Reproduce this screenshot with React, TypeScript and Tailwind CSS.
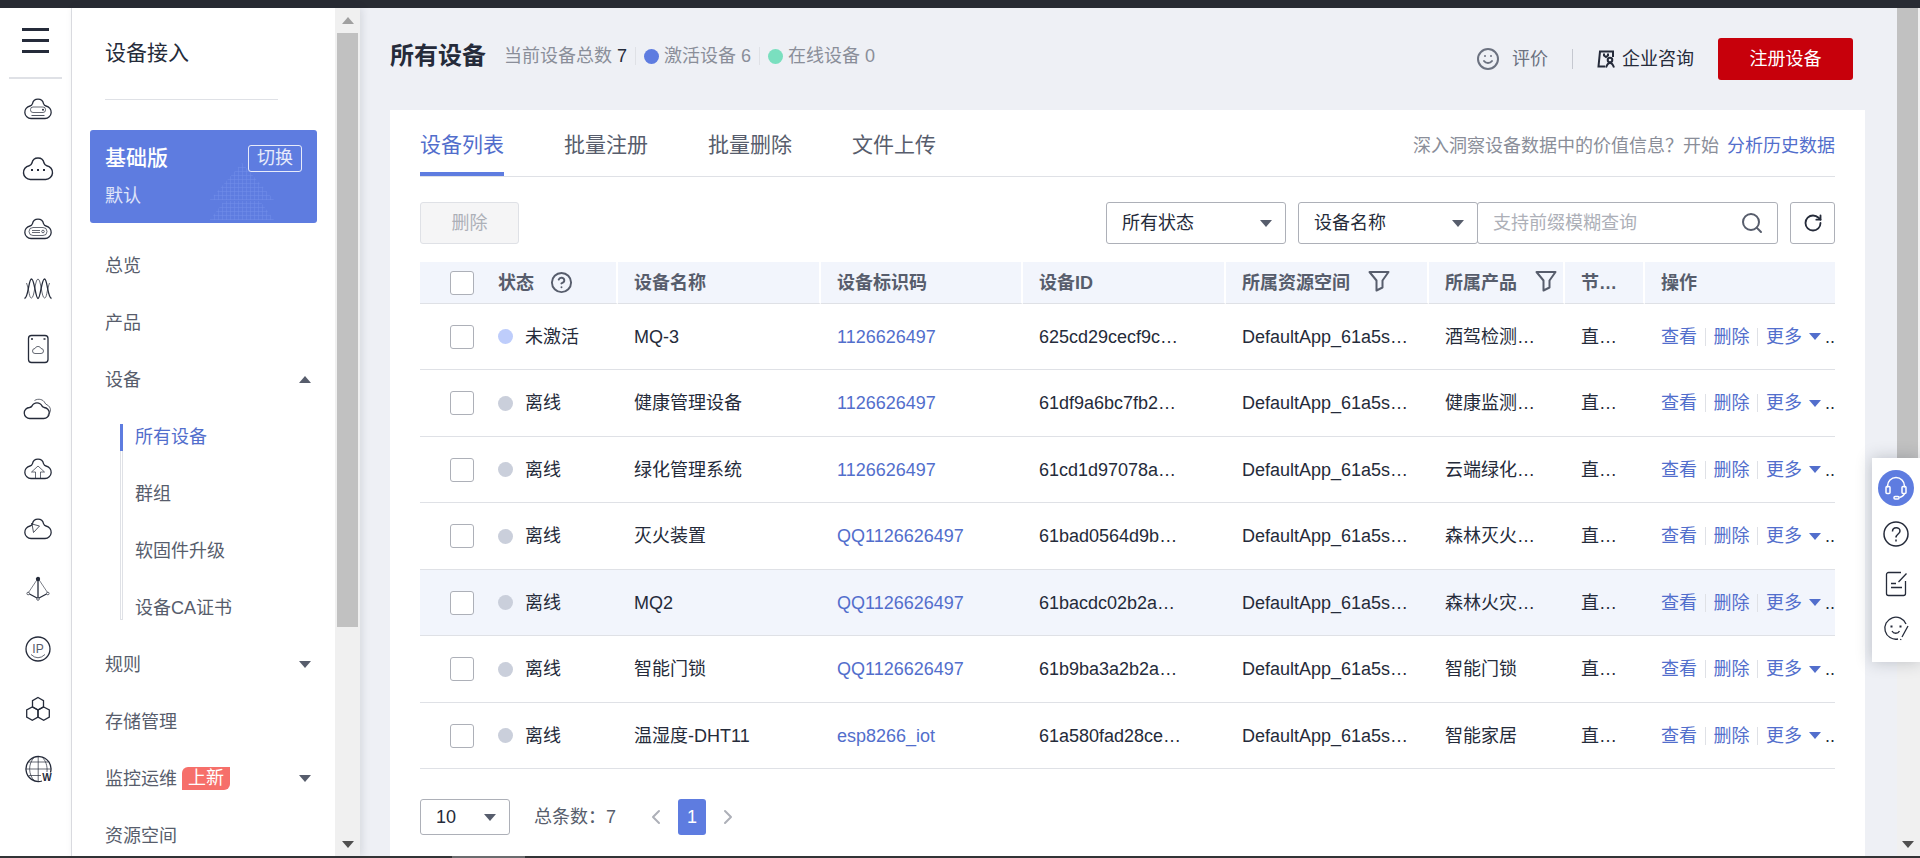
import { ChevronLeft, ChevronRight, CircleHelp, RotateCw, Search, Smile } from "lucide-react";
import type { ReactNode } from "react";

const CLOUD = "M10 26.5A6.3 6.3 0 0 1 9 14c1.5-.3 2-1 2.5-2.4a5.6 5.6 0 0 1 11 0c.5 1.4 1 2.1 2.5 2.400A6.3 6.3 0 0 1 24 26.5Z";

const railIcons: { label: string; art: ReactNode }[] = [
  {
    label: "弹性云服务器",
    art: (
      <>
        <path d={CLOUD} />
        <rect x="9.500" y="15" width="15" height="5.500" rx="2.500" strokeWidth="0.7" />
        <path d="M10.500 23.500h13" strokeWidth="0.8" />
        <circle cx="22" cy="17.700" r="1" fill="currentColor" stroke="none" />
      </>
    ),
  },
  {
    label: "云耀云服务器",
    art: (
      <>
        <path d={CLOUD} transform="translate(-1.700 -1.700) scale(1.100)" />
        <path d="M10 18h2M16 18h2M22 18h2" strokeWidth="2" />
      </>
    ),
  },
  {
    label: "裸金属服务器",
    art: (
      <g>
        <path d={CLOUD} />
        <rect x="8" y="15.500" width="18" height="8" rx="4" strokeWidth="0.7" />
        <path d="M11 18.500h8M11 20.500h8" strokeWidth="0.7" />
        <circle cx="22" cy="19.500" r="1.300" strokeWidth="0.7" />
      </g>
    ),
  },
  {
    label: "弹性伸缩",
    art: (
      <>
        <path d="M3.500 26.500c4-1 4-19.500 7-19.500s4 19.500 6.500 19.500S20.500 7 23.500 7s3 18.500 7 19.500" />
        <path d="M5.500 11c3 8 2.500 15 5 15 3 0 3.500-19 6.500-19s3.500 19 6.500 19c2.500 0 2-7 5-15" strokeWidth="0.7" />
      </>
    ),
  },
  {
    label: "云硬盘",
    art: (
      <>
        <rect x="7.500" y="3.500" width="19.500" height="27" rx="3" />
        <path d="M10 7h2M22.500 7h2" strokeWidth="1.500" />
        <path d="M14 21.500a2.500 2.500 0 0 1 0-5 3.200 3.200 0 0 1 6 0 2.500 2.500 0 0 1 0 5Z" strokeWidth="0.7" />
      </>
    ),
  },
  {
    label: "云备份",
    art: (
      <>
        <path d="M9 26.500a5.500 5.500 0 0 1-.5-11c1.500-.3 2-.8 2.500-1.500a5.500 5.500 0 0 1 10 0c.5.7 1 1.200 2 1.500a5.500 5.500 0 0 1-.5 11Z" />
        <path d="M13.500 8.500c4-2.500 9-1 10.500 2.500.4 1 1 1.300 2 1.800 4.500 2.200 4.500 7.700.5 10.200" strokeWidth="0.7" />
      </>
    ),
  },
  {
    label: "对象存储",
    art: (
      <>
        <path d={CLOUD} />
        <path d="M14.500 26v-6h-4l6.500-6 6.500 6h-4v6" strokeWidth="0.7" />
      </>
    ),
  },
  {
    label: "内容分发",
    art: (
      <>
        <path d={CLOUD} />
        <path d="m11 12 7.500 2-6 6.500ZM11 12l-1-1" strokeWidth="0.8" />
      </>
    ),
  },
  {
    label: "虚拟私有云",
    art: (
      <>
        <path d="M17 7v19M8.500 22l7.500 4M25.500 22 18 26" />
        <path d="M16.500 7 7.500 20.500M17.500 7 26.500 20.500" strokeWidth="0.6" />
        <circle cx="17" cy="7" r="1.500" fill="currentColor" />
        <circle cx="7.200" cy="21.500" r="1.300" strokeWidth="0.7" />
        <circle cx="26.800" cy="21.500" r="1.300" strokeWidth="0.7" />
        <circle cx="17" cy="27" r="1.300" strokeWidth="0.7" />
      </>
    ),
  },
  {
    label: "弹性公网IP",
    art: (
      <>
        <circle cx="17" cy="17" r="12" />
        <text x="17" y="21" textAnchor="middle" fontSize="12" fill="#575d6c" stroke="none">IP</text>
        <path d="M10 22.500q7 6.500 14 0" strokeWidth="0.7" />
      </>
    ),
  },
  {
    label: "区块链",
    art: (
      <>
        <path d="m17 5.500 5.500 3.200v6.100L17 18l-5.500-3.200V8.700Z" />
        <path d="m11.300 15 5.700 3v7l-5.700 3.200L5.700 25v-7Z" />
        <path d="m22.700 15 5.600 3v7l-5.600 3.200L17 25v-7Z" />
      </>
    ),
  },
  {
    label: "域名注册",
    art: (
      <>
        <path d="M29.500 20.500A12.500 12.500 0 1 0 21 29" />
        <path d="M4.800 17h25M17.200 4.500v25M7 10h20.500M8 23.500h12M13.500 5c-7 7-6 18 0 24M21 5c4 4 5.500 9 5 15" strokeWidth="0.7" />
        <text x="26" y="29" textAnchor="middle" fontSize="10" fontWeight="bold" fill="currentColor" stroke="none">W</text>
      </>
    ),
  },
];

const devices = [
  { status: "未激活", name: "MQ-3", code: "1126626497", id: "625cd29cecf9c…", product: "酒驾检测…" },
  { status: "离线", name: "健康管理设备", code: "1126626497", id: "61df9a6bc7fb2…", product: "健康监测…" },
  { status: "离线", name: "绿化管理系统", code: "1126626497", id: "61cd1d97078a…", product: "云端绿化…" },
  { status: "离线", name: "灭火装置", code: "QQ1126626497", id: "61bad0564d9b…", product: "森林灭火…" },
  { status: "离线", name: "MQ2", code: "QQ1126626497", id: "61bacdc02b2a…", product: "森林火灾…", active: true },
  { status: "离线", name: "智能门锁", code: "QQ1126626497", id: "61b9ba3a2b2a…", product: "智能门锁" },
  { status: "离线", name: "温湿度-DHT11", code: "esp8266_iot", id: "61a580fad28ce…", product: "智能家居" },
];

const tabs = ["设备列表", "批量注册", "批量删除", "文件上传"];
const subMenu = ["所有设备", "群组", "软固件升级", "设备CA证书"];

const Caret = ({ up = false }: { up?: boolean }) => (
  <svg viewBox="0 0 12 7" className="h-[7px] w-3 shrink-0 fill-current" aria-hidden="true">
    <path d={up ? "M0 7 6 0l6 7Z" : "M0 0h12L6 7Z"} />
  </svg>
);

const Funnel = ({ label }: { label: string }) => (
  <button aria-label={label} className="shrink-0 pb-1">
    <svg viewBox="0 0 22 22" className="h-[22px] w-[22px] fill-none stroke-current" strokeWidth="2" strokeLinejoin="round">
      <path d="M1.500 2h19l-6 8.500v7L8.500 20.500v-10Z" />
    </svg>
  </button>
);

const Check = ({ label }: { label: string }) => (
  <input
    type="checkbox"
    aria-label={label}
    className="block h-6 w-6 appearance-none rounded-[3px] border border-[#adb0b8] bg-white checked:bg-[#5e7ce0]"
  />
);

const Select = ({ label, value, className }: { label: string; value: string; className: string }) => (
  <div className={`relative text-[#252b3a] ${className}`}>
    <select aria-label={label} className="h-full w-full appearance-none rounded-[3px] border border-[#adb0b8] bg-white pl-[15px]">
      <option>{value}</option>
    </select>
    <span className="pointer-events-none absolute inset-y-0 right-[14px] flex items-center text-[#575d6c]">
      <Caret />
    </span>
  </div>
);

const Rail = () => (
  <nav aria-label="服务" className="flex w-[72px] shrink-0 flex-col items-center overflow-hidden border-r border-[#dfe1e6] bg-white">
    <button aria-label="菜单" className="mt-5 flex flex-col gap-2">
      <span className="h-[3px] w-[27px] bg-[#252b3a]" />
      <span className="h-[3px] w-[27px] bg-[#252b3a]" />
      <span className="h-[3px] w-[27px] bg-[#252b3a]" />
    </button>
    <div className="mt-6 mb-[13px] h-[2px] w-[53px] shrink-0 bg-[#dfe1e6]" />
    <ul className="ml-1">
      {railIcons.map((icon) => (
        <li key={icon.label} className="h-[60px]">
          <a href="#" aria-label={icon.label} className="block text-[#252b3a]">
            <svg viewBox="0 0 34 34" className="h-[34px] w-[34px] fill-none stroke-current" strokeWidth="1.300">
              {icon.art}
            </svg>
          </a>
        </li>
      ))}
    </ul>
  </nav>
);

const MenuItem = ({ label, badge, arrow }: { label: string; badge?: string; arrow?: "up" | "down" }) => (
  <a href="#" className="flex h-[57px] items-center pr-[6px] pl-[15px]">
    {label}
    {badge && (
      <span className="ml-[5px] h-[23px] rounded-tl-[6px] rounded-br-[6px] bg-[#f66f6a] px-[6px] leading-[23px] text-white">{badge}</span>
    )}
    {arrow && (
      <span className="ml-auto">
        <Caret up={arrow === "up"} />
      </span>
    )}
  </a>
);

const Sidebar = () => (
  <aside className="z-10 flex w-[288px] shrink-0 bg-white shadow-[2px_0_8px_rgba(37,43,58,0.12)]">
    <div className="flex-1 overflow-hidden pr-[18px] pl-[18px] text-[#575d6c]">
      <h2 className="mt-[31px] pl-[15px] text-[21px] leading-7 text-[#252b3a]">设备接入</h2>
      <div className="mt-8 ml-[15px] h-px w-[173px] bg-[#dfe1e6]" />
      <section className="relative mt-[30px] h-[93px] overflow-hidden rounded-[3px] bg-[#5e7ce0] px-[15px] pt-[14px] text-white">
        <svg viewBox="0 0 64 60" className="absolute right-[43px] bottom-0 h-[60px] w-16" aria-hidden="true">
          <defs>
            <pattern id="mesh" width="4" height="4" patternUnits="userSpaceOnUse">
              <path d="M0 0h4M0 0v4" stroke="#7f9bf0" strokeWidth="1" />
            </pattern>
          </defs>
          <path d="M32 0 64 37H0ZM14 38h36l14 19H0Z" fill="url(#mesh)" opacity="0.6" />
        </svg>
        <div className="relative flex items-center justify-between">
          <strong className="text-[21px] leading-7 font-medium">基础版</strong>
          <button className="h-[27px] w-[54px] rounded-[3px] border border-white/85 leading-6 text-white/85">切换</button>
        </div>
        <p className="relative mt-3 leading-6 text-white/80">默认</p>
      </section>
      <ul className="mt-[14px]">
        <li><MenuItem label="总览" /></li>
        <li><MenuItem label="产品" /></li>
        <li>
          <MenuItem label="设备" arrow="up" />
          <div className="flex pl-[30px]">
            <div className="my-4 flex w-[3px] flex-col">
              <span className="h-[27px] bg-[#5e7ce0]" />
              <span className="flex-1 border border-t-0 border-[#dfe1e6]" />
            </div>
            <ul className="pl-3">
              {subMenu.map((label, i) => (
                <li key={label}>
                  <a href="#" className={`flex h-[57px] items-center ${i === 0 ? "text-[#526ecc]" : ""}`}>{label}</a>
                </li>
              ))}
            </ul>
          </div>
        </li>
        <li><MenuItem label="规则" arrow="down" /></li>
        <li><MenuItem label="存储管理" /></li>
        <li><MenuItem label="监控运维" badge="上新" arrow="down" /></li>
        <li><MenuItem label="资源空间" /></li>
      </ul>
    </div>
    <div className="flex w-[25px] flex-col items-center bg-[#f0f0f0]">
      <span className="flex h-[25px] items-center text-[#a0a0a0]"><Caret up /></span>
      <span className="h-[594px] w-[21px] bg-[#c1c1c1]" />
      <span className="mt-auto flex h-6 items-center text-[#505050]"><Caret /></span>
    </div>
  </aside>
);

const PageHeader = () => (
  <header className="flex h-[102px] items-start justify-between pr-3">
    <div className="mt-[30px] flex h-9 items-center text-[#8a8e99]">
      <h1 className="mr-[18px] text-2xl font-bold text-[#252b3a]">所有设备</h1>
      <span>当前设备总数 <span className="text-[#252b3a]">7</span></span>
      <span className="mx-2 h-[18px] w-px bg-[#dfe1e6]" />
      <span className="mr-[5px] h-[15px] w-[15px] rounded-full bg-[#5e7ce0]" />
      <span>激活设备 6</span>
      <span className="mx-2 h-[18px] w-px bg-[#dfe1e6]" />
      <span className="mr-[5px] h-[15px] w-[15px] rounded-full bg-[#7adfbf]" />
      <span>在线设备 0</span>
    </div>
    <div className="mt-[30px] flex h-[42px] items-center">
      <a href="#" className="flex items-center gap-3 text-[#6c7280]">
        <Smile className="h-6 w-6" strokeWidth={2} />
        评价
      </a>
      <span className="mx-6 h-5 w-px bg-[#c5c8d0]" />
      <a href="#" className="mr-6 flex items-center gap-[7px] text-[#252b3a]">
        <svg viewBox="0 0 18 18" className="h-[18px] w-[18px] fill-none stroke-current" strokeWidth="2">
          <path d="M8 16.500H1.500L3 1.500h13V7M7 3.500v2l2 1.500 2-1.500v-2" />
          <circle cx="13" cy="10" r="2.300" />
          <path d="M9 17.500c1-3 2-4.500 4-4.500s3 1.500 4 4.500" />
        </svg>
        企业咨询
      </a>
      <button className="h-[42px] w-[135px] rounded-[3px] bg-[#c7000b] text-white">注册设备</button>
    </div>
  </header>
);

const Toolbar = () => (
  <div className="mt-[25px] flex h-[42px]">
    <button disabled className="w-[99px] rounded-[3px] border border-[#dfe1e6] bg-[#f5f5f6] text-[#adb0b8]">删除</button>
    <Select label="状态" value="所有状态" className="mr-3 ml-auto w-[180px]" />
    <Select label="查询字段" value="设备名称" className="w-[180px]" />
    <div className="relative -ml-px w-[301px]">
      <input
        type="search"
        aria-label="查询设备"
        placeholder="支持前缀模糊查询"
        className="h-full w-full rounded-[3px] border border-[#adb0b8] px-[15px] placeholder:text-[#adb0b8]"
      />
      <button aria-label="查询" className="absolute inset-y-0 right-[14px] text-[#575d6c]">
        <Search className="h-6 w-6" strokeWidth={2} />
      </button>
    </div>
    <button aria-label="刷新" className="ml-3 flex w-[45px] items-center justify-center rounded-[3px] border border-[#adb0b8] text-[#252b3a]">
      <RotateCw className="h-5 w-5" strokeWidth={2.2} />
    </button>
  </div>
);

const th = "border-r-2 border-b border-r-white border-b-[#dfe1e6] pl-4";

const DeviceTable = () => (
  <table className="mt-[18px] w-full table-fixed border-separate border-spacing-0 text-left whitespace-nowrap">
    <colgroup>
      <col className="w-[62px]" />
      <col className="w-[136px]" />
      <col className="w-[203px]" />
      <col className="w-[202px]" />
      <col className="w-[203px]" />
      <col className="w-[203px]" />
      <col className="w-[136px]" />
      <col className="w-[80px]" />
      <col className="w-[190px]" />
    </colgroup>
    <thead className="bg-[#f2f5fc] text-[#575d6c]">
      <tr className="h-[42px]">
        <th className="border-b border-[#dfe1e6] pl-[30px]"><Check label="全选" /></th>
        <th className={th}>
          <div className="flex items-center gap-4">状态 <CircleHelp className="h-[23px] w-[23px]" strokeWidth={2} /></div>
        </th>
        <th className={th}>设备名称</th>
        <th className={th}>设备标识码</th>
        <th className={th}>设备ID</th>
        <th className={th}><div className="flex items-center gap-[18px]">所属资源空间 <Funnel label="筛选资源空间" /></div></th>
        <th className={th}><div className="flex items-center gap-[18px]">所属产品 <Funnel label="筛选产品" /></div></th>
        <th className={th}>节…</th>
        <th className="border-b border-[#dfe1e6] pl-4">操作</th>
      </tr>
    </thead>
    <tbody className="text-[#252b3a] [&_td]:border-b [&_td]:border-[#dfe1e6] [&_td]:pl-4">
      {devices.map((d) => (
        <tr key={d.id} className={`odd:h-[66px] even:h-[67px] ${d.active ? "bg-[#f2f5fc]" : ""}`}>
          <td><div className="pl-[14px]"><Check label={`选择 ${d.name}`} /></div></td>
          <td>
            <div className="flex items-center gap-3">
              <span className={`h-[15px] w-[15px] rounded-full ${d.status === "离线" ? "bg-[#cacfdb]" : "bg-[#becdfb]"}`} />
              {d.status}
            </div>
          </td>
          <td>{d.name}</td>
          <td><a href="#" className="text-[#526ecc]">{d.code}</a></td>
          <td>{d.id}</td>
          <td>DefaultApp_61a5s…</td>
          <td>{d.product}</td>
          <td>直…</td>
          <td>
            <div className="flex items-center text-[#526ecc]">
              <a href="#">查看</a>
              <span className="mx-2 h-[18px] w-px bg-[#dfe1e6]" />
              <a href="#">删除</a>
              <span className="mx-2 h-[18px] w-px bg-[#dfe1e6]" />
              <button className="flex items-center gap-[7px]">更多 <Caret /></button>
              <span className="pl-1 text-[#252b3a]">..</span>
            </div>
          </td>
        </tr>
      ))}
    </tbody>
  </table>
);

const Pagination = () => (
  <footer className="mt-[30px] flex h-9 items-center text-[#575d6c]">
    <Select label="每页条数" value="10" className="h-9 w-[90px]" />
    <span className="ml-6">总条数：7</span>
    <button aria-label="上一页" className="ml-7 text-[#adb0b8]"><ChevronLeft className="h-6 w-6" /></button>
    <button className="mx-[10px] h-9 w-7 rounded-[3px] bg-[#5e7ce0] text-white">1</button>
    <button aria-label="下一页" className="text-[#adb0b8]"><ChevronRight className="h-6 w-6" /></button>
  </footer>
);

const HelpDock = () => (
  <div className="absolute top-[458px] right-0 z-20 flex h-[204px] w-12 flex-col items-center bg-white pt-3 text-[#252b3a] shadow-[0_0_15px_rgba(37,43,58,0.25)]">
    <button aria-label="在线客服" className="flex h-9 w-9 items-center justify-center rounded-full bg-[#5e7ce0] text-white">
      <svg viewBox="0 0 24 24" className="h-6 w-6 fill-none stroke-current" strokeWidth="1.500">
        <path d="M3.500 11.500V10a8.500 8.500 0 0 1 17 0v1.500M20.500 17c0 2-2 3.500-5 4.500" />
        <rect x="2" y="10.500" width="4" height="7" rx="1" />
        <rect x="18" y="10.500" width="4" height="7" rx="1" />
        <rect x="10" y="20.500" width="5" height="2.500" rx="1" />
      </svg>
    </button>
    <button aria-label="帮助" className="mt-[14px]">
      <svg viewBox="0 0 28 28" className="h-7 w-7 fill-none stroke-current" strokeWidth="1.500">
        <circle cx="14" cy="14" r="12" />
        <path d="M10.500 11.500c0-5 7.500-5 7.500-.5 0 3-4 3-4 6.500M14 19.500v2" />
      </svg>
    </button>
    <button aria-label="建议" className="mt-[22px]">
      <svg viewBox="0 0 28 28" className="h-7 w-7 fill-none stroke-current" strokeWidth="1.300">
        <path d="M19 2.500H6.500a2 2 0 0 0-2 2v19a2 2 0 0 0 2 2h15a2 2 0 0 0 2-2V11M24.500 3.500l-8 8.500M9 13.500h5M9 17.500h11" />
      </svg>
    </button>
    <button aria-label="满意度评价" className="mt-4">
      <svg viewBox="0 0 28 28" className="h-7 w-7 fill-none stroke-current" strokeWidth="1.300">
        <path d="M24 10A11 11 0 1 0 16 25M26 12l-6 11M19 25l-.5 1M10 17c1.500 3 6 3 7.500 0" />
        <path d="M8.500 12.500h2M17.500 12.500h2" strokeWidth="2" />
      </svg>
    </button>
  </div>
);

export default function App() {
  return (
    <div className="relative flex h-screen flex-col overflow-hidden bg-[#eef0f5] font-['Liberation_Sans','Noto_Sans_CJK_SC',sans-serif] text-lg leading-6">
      <div className="h-2 shrink-0 bg-[#282b33]" />
      <div className="flex min-h-0 flex-1">
        <Rail />
        <Sidebar />
        <main className="flex min-w-0 flex-1 flex-col pr-8 pl-[30px]">
          <PageHeader />
          <section className="flex-1 bg-white px-[30px]">
            <div className="flex h-[67px] border-b border-[#dfe1e6]">
              <div role="tablist" className="flex gap-[60px] text-[21px] text-[#575d6c]">
                {tabs.map((tab, i) => (
                  <button
                    key={tab}
                    role="tab"
                    aria-selected={i === 0}
                    className={`border-b-4 pt-2 ${i === 0 ? "border-[#5e7ce0] text-[#526ecc]" : "border-transparent"}`}
                  >
                    {tab}
                  </button>
                ))}
              </div>
              <p className="ml-auto pt-6 text-[#8a8e99]">
                深入洞察设备数据中的价值信息？开始&nbsp;
                <a href="#" className="ml-[3px] text-[#526ecc]">分析历史数据</a>
              </p>
            </div>
            <Toolbar />
            <DeviceTable />
            <Pagination />
          </section>
        </main>
        <div className="flex w-[23px] shrink-0 flex-col bg-[#f0f0f0]">
          <span className="h-[500px] w-[21px] bg-[#c1c1c1]" />
          <span className="mt-auto flex h-6 w-[21px] items-center justify-center text-[#505050]"><Caret /></span>
        </div>
      </div>
      <div className="flex h-[2px] shrink-0 bg-[#333436]">
        <span className="ml-[452px] w-[73px] bg-[#6b6c6e]" />
      </div>
      <HelpDock />
    </div>
  );
}
